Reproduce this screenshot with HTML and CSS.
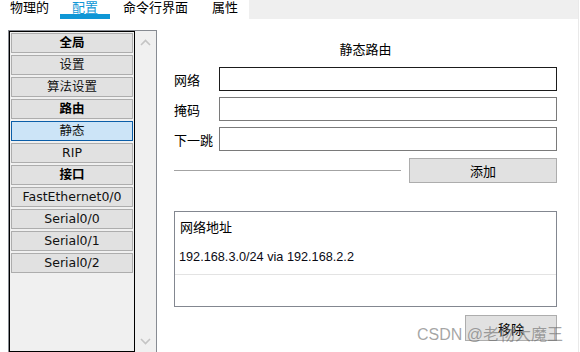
FILE: index.html
```html
<!DOCTYPE html>
<html lang="zh">
<head>
    <meta charset="UTF-8">
    <title>静态路由</title>
    <link rel="stylesheet" href="styles.css">
</head>
<body>
    <div class="window">
        <div class="tabs">
            <span class="tab tab-first">物理的</span>
            <span class="tab tab-active">配置</span>
            <span class="tab tab-cli">命令行界面</span>
            <span class="tab tab-last">属性</span>
            <span class="tab-fill"></span>
        </div>
        <div class="main">
            <div class="side">
                <div class="list">
                    <div class="item head">全局</div>
                    <div class="item">设置</div>
                    <div class="item">算法设置</div>
                    <div class="item head">路由</div>
                    <div class="item selected">静态</div>
                    <div class="item">RIP</div>
                    <div class="item head">接口</div>
                    <div class="item">FastEthernet0/0</div>
                    <div class="item">Serial0/0</div>
                    <div class="item">Serial0/1</div>
                    <div class="item">Serial0/2</div>
                </div>
                <div class="scroll">
                    <svg width="11" height="7" viewBox="0 0 11 7"><path d="M1 6 L5.5 1.5 L10 6" fill="none" stroke="#c4c4c4" stroke-width="1.6"/></svg>
                    <svg width="11" height="7" viewBox="0 0 11 7"><path d="M1 1 L5.5 5.5 L10 1" fill="none" stroke="#c4c4c4" stroke-width="1.6"/></svg>
                </div>
            </div>
            <div class="panel">
                <div class="title">静态路由</div>
                <div class="form">
                    <label>网络</label>
                    <div class="field focus"></div>
                    <label>掩码</label>
                    <div class="field"></div>
                    <label>下一跳</label>
                    <div class="field"></div>
                </div>
                <div class="add-row">
                    <span class="rule"></span>
                    <button class="btn btn-add">添加</button>
                </div>
                <div class="routes">
                    <div class="routes-head">网络地址</div>
                    <div class="route">192.168.3.0/24 via 192.168.2.2</div>
                </div>
                <div class="remove-row">
                    <button class="btn btn-remove">移除</button>
                </div>
            </div>
        </div>
        <div class="watermark">CSDN @老物大魔王</div>
    </div>
</body>
</html>
```

FILE: styles.css
```css
html, body {
    margin: 0;
    padding: 0;
    background-color: white;
}
body {
    font-family: "Noto Sans CJK SC", sans-serif;
    font-size: 13px;
    color: black;
}
.window {
    position: relative;
    width: 578px;
    height: 352px;
    border-right: 1px solid #e9e9e9;
    overflow: hidden;
}

/* tab strip */
.tabs {
    display: flex;
    height: 19px;
}
.tab {
    line-height: 14px;
    height: 14px;
    white-space: nowrap;
}
.tab-first {
    padding: 0 11px 0 10px;
}
.tab-active {
    width: 50px;
    text-align: center;
    color: #0f97d6;
    border-bottom: 5px solid #0f97d6;
}
.tab-cli {
    padding: 0 24px 0 13px;
}
.tab-last {
    padding-right: 11px;
}
.tab-fill {
    flex: 1;
    height: 19px;
    background-color: #efefef;
}

.main {
    display: flex;
    gap: 17px;
    margin-top: 11px;
    padding-left: 8px;
}

/* left tree list */
.side {
    display: flex;
    width: 149px;
    height: 323px;
    border: 1px solid #878b92;
    box-sizing: border-box;
    background-color: #f0f0f0;
}
.list {
    display: flex;
    flex-direction: column;
    gap: 2px;
    width: 126px;
    padding: 1px 1px 0 1px;
    border: 1px solid black;
    box-sizing: border-box;
}
.item {
    height: 20px;
    line-height: 18px;
    width: 122px;
    box-sizing: border-box;
    border: 1px solid #adadad;
    background-color: #e1e1e1;
    text-align: center;
    font-family: "DejaVu Sans", "Noto Sans CJK SC", sans-serif;
    font-size: 12.5px;
    color: #111;
}
.item.head {
    font-weight: bold;
    color: black;
}
.item.selected {
    background-color: #cce4f7;
    border-color: #0b5ea8;
}
.scroll {
    flex: 1;
    display: flex;
    flex-direction: column;
    justify-content: space-between;
    align-items: center;
    padding: 8px 0 7px 0;
}

/* right panel */
.panel {
    width: 383px;
}
.title {
    margin-top: 10px;
    line-height: 18px;
    text-align: center;
}
.form {
    display: grid;
    grid-template-columns: 45px 338px;
    row-gap: 6px;
    align-items: center;
    margin-top: 9px;
}
.field {
    height: 24px;
    box-sizing: border-box;
    border: 1px solid #7a7a7a;
    background-color: white;
}
.field.focus {
    border-color: #1b1b1b;
}
.add-row {
    display: flex;
    align-items: center;
    gap: 8px;
    margin-top: 7px;
}
.rule {
    flex: 1;
    height: 1px;
    background-color: #a3a3a3;
}
.btn {
    box-sizing: border-box;
    border: 1px solid #adadad;
    background-color: #e1e1e1;
    font-family: "Noto Sans CJK SC", sans-serif;
    font-size: 13px;
    color: black;
    padding: 0;
}
.btn-add {
    width: 148px;
    height: 25px;
}
.routes {
    margin-top: 28px;
    height: 96px;
    border: 1px solid #838790;
    box-sizing: border-box;
}
.routes-head {
    height: 29px;
    line-height: 29px;
    padding-left: 5px;
}
.route {
    line-height: 33px;
    padding-left: 4px;
    border-bottom: 1px solid #e3e3e3;
    font-family: "Liberation Sans", Arial, sans-serif;
    font-size: 12.7px;
    color: #0a0a14;
}
.remove-row {
    display: flex;
    justify-content: flex-end;
    margin-top: 8px;
}
.btn-remove {
    width: 92px;
    height: 26px;
}

.watermark {
    position: absolute;
    left: 417px;
    top: 325px;
    font-family: "Liberation Sans", "Noto Sans CJK SC", sans-serif;
    font-size: 16px;
    line-height: 20px;
    color: rgba(105, 105, 105, 0.6);
    white-space: nowrap;
}
```
